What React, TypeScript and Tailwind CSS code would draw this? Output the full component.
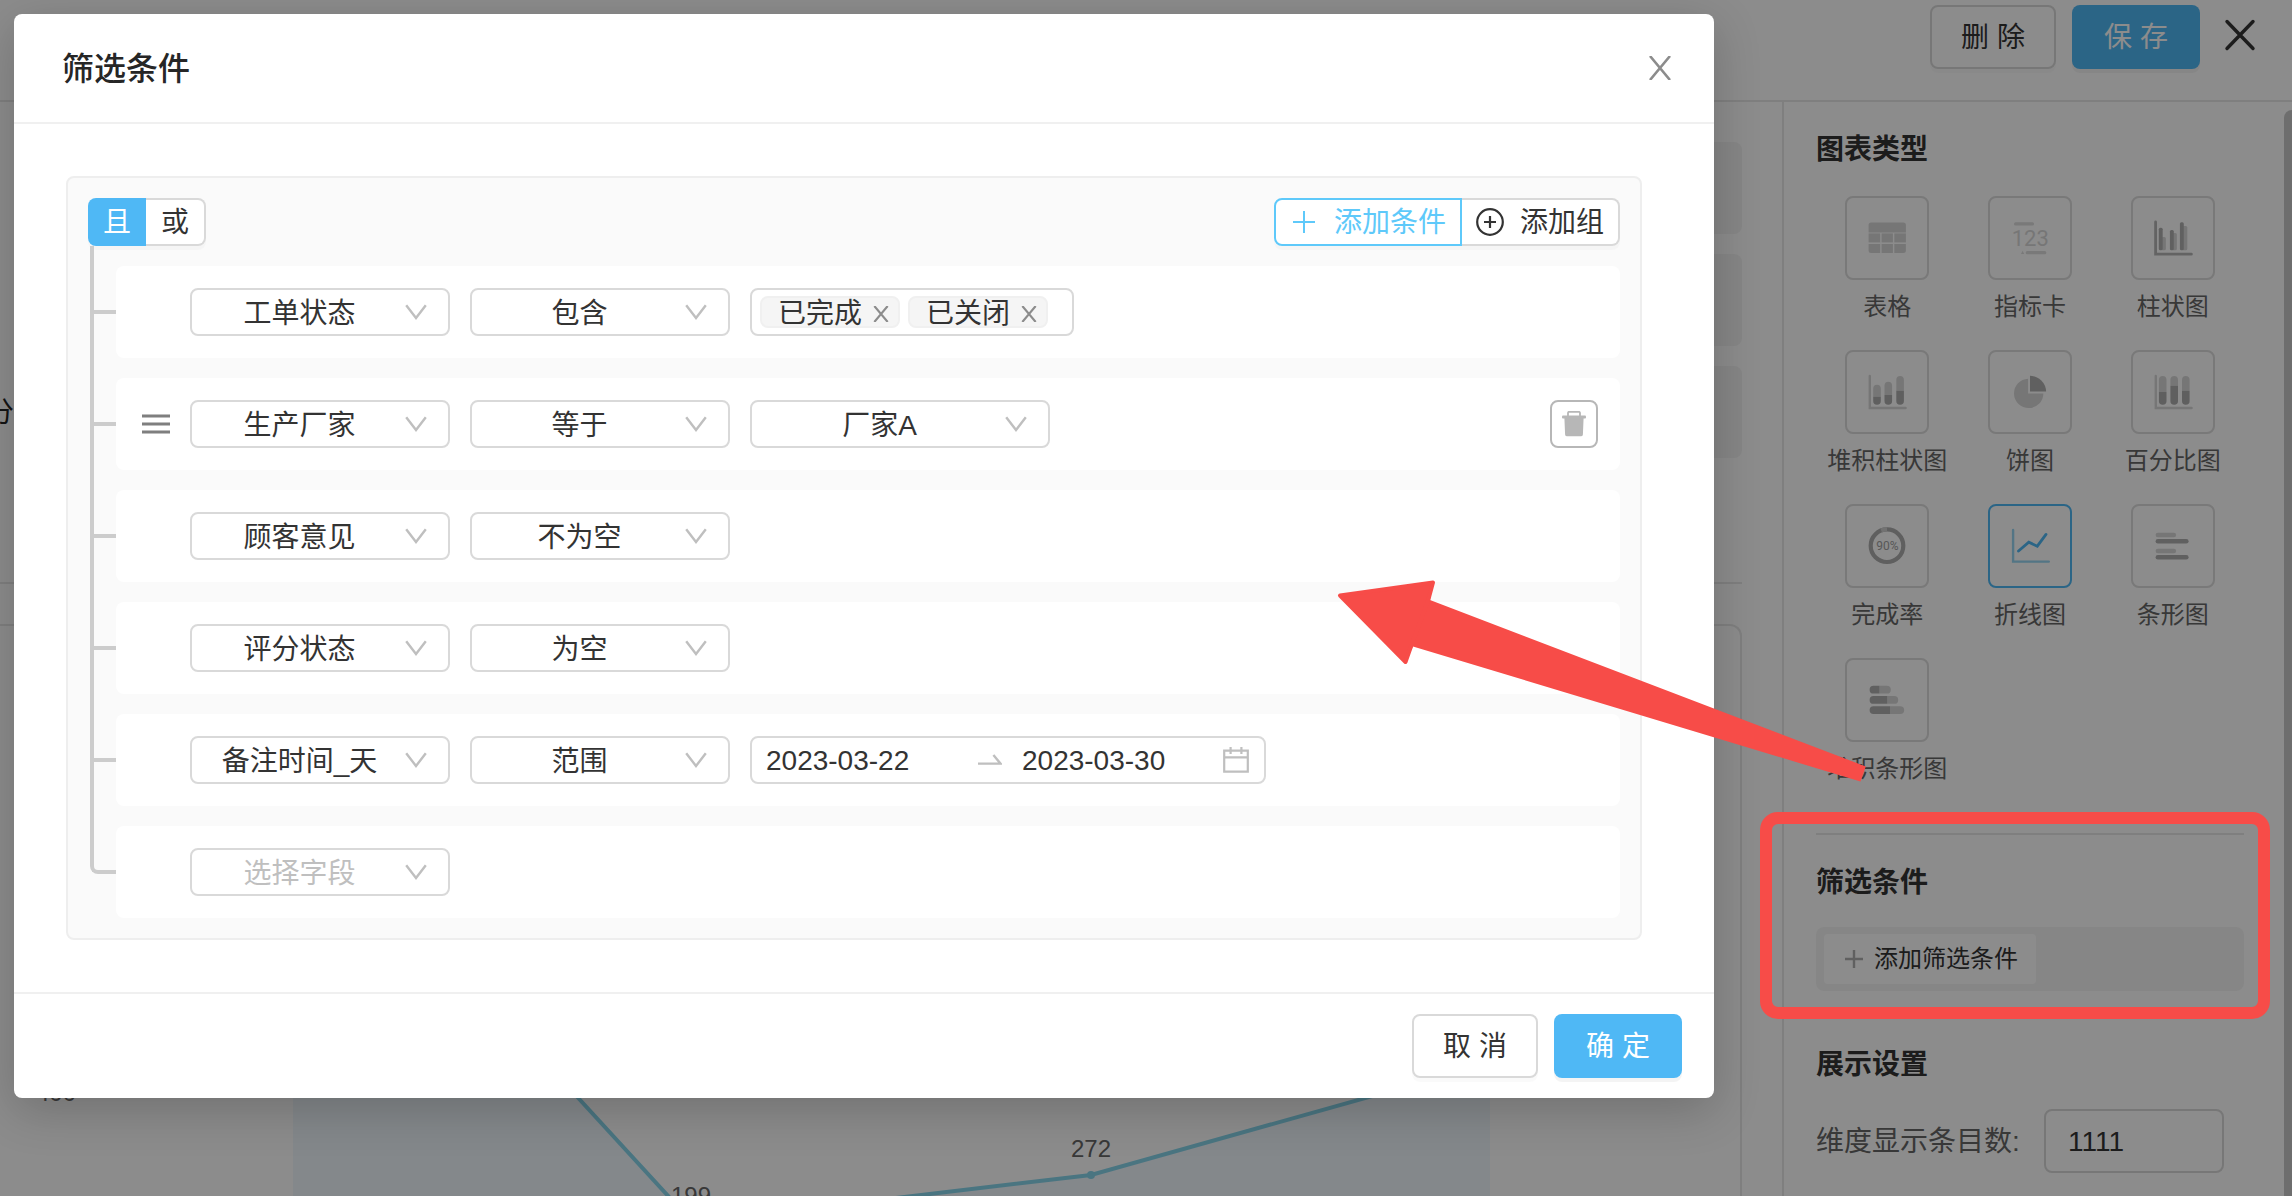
import React from "react";

const LIGHT = "#d8d8d8";
const DARK = "#b0b0b0";

/* ---------- small icons ---------- */

function Chevron() {
  return (
    <svg className="pointer-events-none absolute top-4 right-[23px] h-4 w-[22px]" viewBox="0 0 22 16" fill="none" aria-hidden="true">
      <path d="M1.2 1.2 L11 14 L20.8 1.2" stroke="#bfbfbf" strokeWidth="2.4" />
    </svg>
  );
}

function Cross({ className, width }: { className: string; width: number }) {
  return (
    <svg className={className} viewBox="0 0 24 24" fill="none" aria-hidden="true">
      <path d="M2 0 L22 24 M22 0 L2 24" stroke="currentColor" strokeWidth={width} />
    </svg>
  );
}

function TrashIcon() {
  return (
    <svg className="h-[26px] w-6" viewBox="0 0 24 26" aria-hidden="true">
      <path d="M6 5 V2 a1.2 1.2 0 0 1 1.2-1.2 H16.8 A1.2 1.2 0 0 1 18 2 V5" fill="none" stroke="#b7b7b7" strokeWidth="1.8" />
      <rect x="0" y="4.4" width="24" height="3" rx="1" fill="#b7b7b7" />
      <path d="M2.4 7 H21.6 L20.9 23.6 a1.6 1.6 0 0 1 -1.6 1.6 H4.7 a1.6 1.6 0 0 1 -1.6 -1.6 Z" fill="#b7b7b7" />
    </svg>
  );
}

function DragIcon() {
  return (
    <svg className="h-5 w-7" viewBox="0 0 28 20" aria-hidden="true">
      <path d="M0 2 H28 M0 10 H28 M0 18 H28" stroke="#7f7f7f" strokeWidth="3" />
    </svg>
  );
}

function CalendarIcon() {
  return (
    <svg className="h-[26px] w-[26px]" viewBox="0 0 26 26" fill="none" aria-hidden="true">
      <path d="M1.2 3.6 H24.8 V24.6 H1.2 Z M1.2 10.4 H24.8 M7.6 0 V7 M18.4 0 V7" stroke="#bfbfbf" strokeWidth="2.2" />
    </svg>
  );
}

/* ---------- chart type icons (40 x 40) ---------- */

function TableChart() {
  return (
    <g fill={LIGHT}>
      <path d="M1.6 14.4 V7 a2.5 2.5 0 0 1 2.5-2.6 H36.4 a2.5 2.5 0 0 1 2.5 2.6 V14.4 Z" />
      <rect x="1.6" y="15.4" width="11.6" height="9" />
      <rect x="14.6" y="15.4" width="11.3" height="9" />
      <rect x="27.3" y="15.4" width="11.6" height="9" />
      <path d="M1.6 26 H13.2 V35 H4.1 a2.5 2.5 0 0 1 -2.5 -2.5 Z" />
      <rect x="14.6" y="26" width="11.3" height="9" />
      <path d="M27.3 26 H38.9 V32.5 a2.5 2.5 0 0 1 -2.5 2.5 H27.3 Z" />
    </g>
  );
}

function CardChart() {
  return (
    <g fill="#dcdcdc">
      <rect x="4" y="4.3" width="20" height="3.2" rx="1.5" />
      <text x="20.3" y="28" textAnchor="middle" fontSize="22" fontFamily="Roboto, sans-serif" fill="#d8d8d8">
        123
      </text>
      <path d="M11 36 L12.6 32.8 L14.2 36 Z" />
      <rect x="15.7" y="33" width="20.6" height="3.2" rx="1.5" />
    </g>
  );
}

function ColumnChart() {
  return (
    <g>
      <path d="M2.6 4 V36.2 H38.4" fill="none" stroke="#b5b5b5" strokeWidth="2.8" strokeLinecap="round" />
      <g fill={LIGHT}>
        <rect x="8" y="19" width="4.9" height="13.3" rx="1.5" />
        <rect x="19" y="15" width="4.9" height="17.3" rx="1.5" />
        <rect x="29" y="8" width="5.3" height="24.3" rx="1.5" />
      </g>
      <g fill={DARK}>
        <rect x="5.8" y="9.7" width="3.9" height="22.6" rx="1.5" />
        <rect x="16.9" y="12" width="3.9" height="20.3" rx="1.5" />
        <rect x="26.9" y="4.3" width="3.9" height="28" rx="1.5" />
      </g>
    </g>
  );
}

function SplitColumn({ x, top, split }: { x: number; top: number; split: number }) {
  return (
    <g>
      <path d={`M${x} ${split} V${top + 3.8} a3.8 3.8 0 0 1 7.6 0 V${split} Z`} fill={LIGHT} />
      <path d={`M${x} ${split} V28.9 a3.8 3.8 0 0 0 7.6 0 V${split} Z`} fill="#adadad" />
    </g>
  );
}

function StackedColumnChart() {
  return (
    <g>
      <path d="M2.8 4 V36 H38.6" fill="none" stroke={LIGHT} strokeWidth="2.4" strokeLinecap="round" />
      <SplitColumn x={6.2} top={12.7} split={24.7} />
      <SplitColumn x={17.5} top={9.7} split={23} />
      <SplitColumn x={29.3} top={4} split={18.7} />
    </g>
  );
}

function PieChart() {
  return (
    <g>
      <path d="M18.1 6.7 A14.7 14.7 0 1 0 33.4 21.5 H18.1 Z" fill={LIGHT} />
      <path d="M20 19.6 V3.8 A16 16 0 0 1 36.1 19.6 Z" fill={DARK} />
    </g>
  );
}

function PercentChart() {
  return (
    <g>
      <path d="M2.8 4 V36 H38.6" fill="none" stroke={LIGHT} strokeWidth="2.4" strokeLinecap="round" />
      <SplitColumn x={5.9} top={4} split={20} />
      <SplitColumn x={17.4} top={4} split={13.7} />
      <SplitColumn x={29} top={4} split={18.7} />
    </g>
  );
}

function RateChart() {
  return (
    <g>
      <circle cx="20" cy="19.7" r="16.3" fill="none" stroke="#adadad" strokeWidth="4.2" />
      <path d="M14.2 4.5 A16.3 16.3 0 0 1 20 3.4" fill="none" stroke="#d0d0d0" strokeWidth="4.2" />
      <text x="20.5" y="24" textAnchor="middle" fontSize="12" fontFamily="Roboto, sans-serif" fill="#a0a0a0">
        90%
      </text>
    </g>
  );
}

function LineChart() {
  return (
    <g fill="none" strokeLinecap="round">
      <path d="M3.1 4 V35.6 H38.8" stroke="#97d6f2" strokeWidth="2.4" />
      <path d="M8.5 25 L18.8 16.2 L27.3 20.2 L36 8.4" stroke="#4fb8f5" strokeWidth="2.8" />
    </g>
  );
}

function BarChart() {
  return (
    <g>
      <rect x="2.6" y="6.8" width="20.5" height="4.5" rx="2.2" fill={LIGHT} />
      <rect x="2.6" y="13" width="33" height="4.5" rx="2.2" fill={DARK} />
      <rect x="2.6" y="22.8" width="20.5" height="4.5" rx="2.2" fill={LIGHT} />
      <rect x="2.6" y="29" width="33" height="4.5" rx="2.2" fill={DARK} />
    </g>
  );
}

function SplitBar({ y, end, split }: { y: number; end: number; split: number }) {
  return (
    <g>
      <path d={`M${split} ${y} H${end - 3.9} a3.9 3.9 0 0 1 0 7.8 H${split} Z`} fill={LIGHT} />
      <path d={`M${split} ${y} H6.5 a3.9 3.9 0 0 0 0 7.8 H${split} Z`} fill={DARK} />
    </g>
  );
}

function StackedBarChart() {
  return (
    <g>
      <SplitBar y={5.8} end={23.8} split={12.5} />
      <SplitBar y={16} end={31.2} split={20.3} />
      <SplitBar y={26.2} end={37.2} split={23} />
    </g>
  );
}

const CHART_TYPES = [
  { name: "表格", icon: <TableChart /> },
  { name: "指标卡", icon: <CardChart /> },
  { name: "柱状图", icon: <ColumnChart /> },
  { name: "堆积柱状图", icon: <StackedColumnChart /> },
  { name: "饼图", icon: <PieChart /> },
  { name: "百分比图", icon: <PercentChart /> },
  { name: "完成率", icon: <RateChart /> },
  { name: "折线图", icon: <LineChart />, active: true },
  { name: "条形图", icon: <BarChart /> },
  { name: "堆积条形图", icon: <StackedBarChart /> },
];

/* ---------- page behind the dialog ---------- */

function TrendChart() {
  return (
    <svg className="h-[570px] w-[1740px]" viewBox="0 0 1740 570" role="img" aria-label="折线图">
      <path d="M293 161 L692 596 L1091 549 L1490 437 V620 H293 Z" fill="#f0f7fd" />
      <path d="M293 161 L692 596 L1091 549 L1490 437" fill="none" stroke="#87d6ec" strokeWidth="4" />
      <circle cx="1091" cy="549" r="4" fill="#87d6ec" />
      <g fontSize="24" fill="#666666" textAnchor="middle">
        <text x="56" y="475">400</text>
        <text x="691" y="578">199</text>
        <text x="1091" y="531">272</text>
      </g>
    </svg>
  );
}

function Workspace() {
  return (
    <main className="min-w-0 flex-1 overflow-hidden pt-10 pr-10">
      <div className="flex flex-col gap-5">
        {["", "", "分"].map((label, i) => (
          <div key={i} className="flex h-[92px] items-center">
            <div className="flex w-[14px] shrink-0 justify-end overflow-hidden pt-0.5 text-[28px] text-[#262626]">{label}</div>
            <div className="h-full flex-1 rounded-lg bg-[#f4f4f4]" />
          </div>
        ))}
      </div>
      <div className="mt-[124px] border-t-2 border-[#e8e8e8]" />
      <div className="mt-10 overflow-hidden rounded-tr-xl border-t-2 border-r-2 border-[#e8e8e8]">
        <TrendChart />
      </div>
    </main>
  );
}

function SidebarHeading({ children }: { children: React.ReactNode }) {
  return <h2 className="pt-[3px] text-[28px] leading-[37px] font-bold text-[#333333]">{children}</h2>;
}

function Sidebar() {
  return (
    <aside className="flex w-[510px] shrink-0 overflow-hidden border-l-2 border-[#e8e8e8]">
      <div className="flex-1 pt-[26px] pr-10 pl-8">
        <SidebarHeading>图表类型</SidebarHeading>
        <div className="mt-7 grid grid-cols-3 gap-y-6">
          {CHART_TYPES.map((t) => (
            <button key={t.name} type="button" className="flex flex-col items-center gap-2">
              <span
                className={
                  t.active
                    ? "flex size-[84px] items-center justify-center rounded-lg border-2 border-[#4fb8f5]"
                    : "flex size-[84px] items-center justify-center rounded-lg border-2 border-[#dcdcdc]"
                }
              >
                <svg className="size-10 overflow-visible" viewBox="0 0 40 40" aria-hidden="true">
                  {t.icon}
                </svg>
              </span>
              <span className="text-2xl leading-[38px] whitespace-nowrap text-[#666666]">{t.name}</span>
            </button>
          ))}
        </div>
        <hr className="mt-[45px] mb-[26px] border-t-2 border-[#e8e8e8]" />
        <SidebarHeading>筛选条件</SidebarHeading>
        <div className="mt-[26px] flex h-16 items-center rounded-lg bg-[#f5f5f5] px-2">
          <button type="button" className="flex h-[50px] w-[212px] items-center gap-[11px] rounded bg-white pl-[21px] text-2xl whitespace-nowrap text-[#333333]">
            <svg className="size-[18px] shrink-0" viewBox="0 0 18 18" aria-hidden="true">
              <path d="M0 9 H18 M9 0 V18" stroke="#b0b0b0" strokeWidth="2.4" />
            </svg>
            添加筛选条件
          </button>
        </div>
        <div className="mt-[52px]">
          <SidebarHeading>展示设置</SidebarHeading>
        </div>
        <div className="mt-[26px] flex items-center justify-between pr-5">
          <label htmlFor="limit" className="pt-0.5 text-[28px] whitespace-nowrap text-[#666666]">
            维度显示条目数:
          </label>
          <input
            id="limit"
            defaultValue="1111"
            className="h-16 w-[180px] rounded-lg border-2 border-[#d9d9d9] px-[22px] pt-0.5 text-[28px] text-[#333333]"
          />
        </div>
      </div>
      <div className="mt-2 w-2 rounded-tl-lg bg-[#c8c8c8]" />
    </aside>
  );
}

/* ---------- dialog ---------- */

function FieldSelect({ value, label, wide, muted }: { value: string; label: string; wide?: boolean; muted?: boolean }) {
  return (
    <div className={wide ? "relative w-[300px]" : "relative w-[260px]"}>
      <select
        aria-label={label}
        defaultValue={value}
        className={
          muted
            ? "h-12 w-full appearance-none rounded-lg border-2 border-[#d9d9d9] bg-white pt-[3px] pr-[61px] pl-5 text-[28px] leading-[40px] text-[#bfbfbf] [text-align-last:center]"
            : "h-12 w-full appearance-none rounded-lg border-2 border-[#d9d9d9] bg-white pt-[3px] pr-[61px] pl-5 text-[28px] leading-[40px] text-[#333333] [text-align-last:center]"
        }
      >
        <option>{value}</option>
      </select>
      <Chevron />
    </div>
  );
}

function TagBox({ tags }: { tags: string[] }) {
  return (
    <div className="flex h-12 items-center gap-2 rounded-lg border-2 border-[#d9d9d9] bg-white pr-6 pl-2">
      {tags.map((tag) => (
        <span key={tag} className="flex h-8 w-[140px] items-center rounded-lg border-2 border-[#f0f0f0] bg-[#f5f5f5] pl-4 text-[28px] text-[#333333]">
          <span className="pt-[3px] leading-7">{tag}</span>
          <button type="button" aria-label={`移除${tag}`} className="ml-[11px] pt-1 text-[#8c8c8c]">
            <Cross className="size-4" width={3.2} />
          </button>
        </span>
      ))}
    </div>
  );
}

function DateRange({ from, to }: { from: string; to: string }) {
  return (
    <div className="flex h-12 w-[516px] items-center rounded-lg border-2 border-[#d9d9d9] bg-white pr-[15px] pl-[14px] text-[28px] text-[#333333]">
      <input aria-label="开始日期" defaultValue={from} className="h-10 w-[200px] pt-0.5" />
      <svg className="mr-5 ml-3 h-3 w-6 shrink-0" viewBox="0 0 24 12" fill="none" aria-hidden="true">
        <path d="M0 9.6 H22.5 L15.4 1" stroke="#bfbfbf" strokeWidth="2.4" />
      </svg>
      <input aria-label="结束日期" defaultValue={to} className="h-10 w-0 min-w-0 flex-1 pt-0.5" />
      <CalendarIcon />
    </div>
  );
}

const CONDITIONS: { field: string; op?: string; value?: React.ReactNode; hovered?: boolean }[] = [
  { field: "工单状态", op: "包含", value: <TagBox tags={["已完成", "已关闭"]} /> },
  { field: "生产厂家", op: "等于", value: <FieldSelect label="值" value="厂家A" wide />, hovered: true },
  { field: "顾客意见", op: "不为空" },
  { field: "评分状态", op: "为空" },
  { field: "备注时间_天", op: "范围", value: <DateRange from="2023-03-22" to="2023-03-30" /> },
  { field: "选择字段" },
];

function ConditionPanel() {
  return (
    <section className="rounded-lg border-2 border-[#eeeeee] bg-[#fafafa] p-5 text-[28px] text-[#333333]">
      <div className="flex h-12 items-stretch justify-between">
        <div className="flex rounded-lg shadow-[0_4px_0_rgba(0,0,0,0.02)]">
          <button type="button" className="w-[58px] rounded-l-lg bg-[#4fb8f5] pt-0.5 leading-[46px] text-white">
            且
          </button>
          <button type="button" className="w-[60px] rounded-r-lg border-2 border-l-0 border-[#d9d9d9] bg-white pt-0.5 leading-[42px]">
            或
          </button>
        </div>
        <div className="flex rounded-lg shadow-[0_4px_0_rgba(0,0,0,0.02)]">
          <button type="button" className="flex items-center gap-4 rounded-l-lg border-2 border-[#5ec9fa] bg-white px-[14px] leading-10 text-[#5ec9fa]">
            <svg className="size-7" viewBox="0 0 28 28" aria-hidden="true">
              <path d="M3 14 H25 M14 3 V25" stroke="currentColor" strokeWidth="2" />
            </svg>
            <span className="pt-0.5">添加条件</span>
          </button>
          <button type="button" className="flex items-center gap-4 rounded-r-lg border-2 border-l-0 border-[#d9d9d9] bg-white px-[14px] leading-10">
            <svg className="size-7" viewBox="0 0 28 28" fill="none" aria-hidden="true">
              <circle cx="14" cy="14" r="12.8" stroke="currentColor" strokeWidth="2.2" />
              <path d="M8 14 H20 M14 8 V20" stroke="currentColor" strokeWidth="2.2" />
            </svg>
            <span className="pt-0.5">添加组</span>
          </button>
        </div>
      </div>
      <div className="flex">
        <div className="mb-11 ml-0.5 flex w-[26px] shrink-0 flex-col gap-[108px] rounded-bl-lg border-b-4 border-l-4 border-[#cccccc] pt-16">
          {CONDITIONS.slice(1).map((c) => (
            <span key={c.field} className="h-1 bg-[#cccccc]" />
          ))}
        </div>
        <ul className="flex flex-1 flex-col gap-5 pt-5">
          {CONDITIONS.map((c) => (
            <li key={c.field} className="flex h-[92px] items-center rounded-lg bg-white pr-[22px]">
              <div className="w-[74px] shrink-0 pl-[26px]">
                {c.hovered && (
                  <button type="button" aria-label="拖动排序" className="block">
                    <DragIcon />
                  </button>
                )}
              </div>
              <div className="flex flex-1 gap-5">
                <FieldSelect label="字段" value={c.field} muted={!c.op} />
                {c.op && <FieldSelect label="运算符" value={c.op} />}
                {c.value}
              </div>
              {c.hovered && (
                <button type="button" aria-label="删除条件" className="flex size-12 items-center justify-center rounded-lg border-2 border-[#b7b7b7]">
                  <TrashIcon />
                </button>
              )}
            </li>
          ))}
        </ul>
      </div>
    </section>
  );
}

function FilterDialog() {
  return (
    <div role="dialog" aria-label="筛选条件" className="w-full rounded-lg bg-white shadow-[0_12px_48px_rgba(0,0,0,0.2)]">
      <header className="flex h-[110px] items-center justify-between border-b-2 border-[#f0f0f0] pr-[42px] pl-12">
        <h1 className="pt-0.5 text-[32px] font-medium text-[#262626]">筛选条件</h1>
        <button type="button" aria-label="关闭" className="text-[#8c8c8c]">
          <Cross className="size-6" width={2.6} />
        </button>
      </header>
      <div className="py-[52px] pr-[72px] pl-[52px]">
        <ConditionPanel />
      </div>
      <footer className="flex h-[106px] items-center justify-end gap-4 border-t-2 border-[#f0f0f0] pr-8 text-[28px]">
        <button type="button" className="h-16 w-[126px] rounded-lg border-2 border-[#d9d9d9] bg-white pt-0.5 text-[#333333] shadow-[0_4px_0_rgba(0,0,0,0.02)]">
          取 消
        </button>
        <button type="button" className="h-16 w-32 rounded-lg bg-[#4fb8f5] pt-0.5 text-white shadow-[0_4px_0_rgba(0,0,0,0.045)]">
          确 定
        </button>
      </footer>
    </div>
  );
}

/* ---------- callout marks drawn over the page ---------- */

function Callouts() {
  return (
    <>
      <div className="pointer-events-none absolute top-[812px] right-[22px] h-[207px] w-[510px] rounded-[18px] border-12 border-[#f74c48]" />
      <svg className="pointer-events-none absolute top-[576px] right-[422px] h-[212px] w-[536px]" viewBox="1334 576 536 212" aria-hidden="true">
        <path
          d="M1340 596 L1405.5 662 L1413 646.5 L1860.5 781.5 L1865.8 766.5 L1430 600 L1433 582.5 Z"
          fill="#f74c48"
        />
        <path
          d="M1411.5 645 L1405.5 662 L1340 595.5 L1433 582.5 L1428 601 Z"
          fill="#f74c48"
          stroke="#f74c48"
          strokeWidth="4"
          strokeLinejoin="round"
        />
      </svg>
    </>
  );
}

export default function App() {
  return (
    <div className="relative flex h-screen flex-col overflow-hidden bg-white font-['Liberation_Sans','Noto_Sans_CJK_SC',sans-serif]">
      <header className="flex h-[102px] shrink-0 items-start justify-end gap-4 border-b-2 border-[#e8e8e8] pt-[5px] pr-[34px] text-[28px]">
        <button type="button" className="h-16 w-[126px] rounded-lg border-2 border-[#d9d9d9] pt-0.5 text-[#333333] shadow-[0_4px_0_rgba(0,0,0,0.02)]">
          删 除
        </button>
        <button type="button" className="h-16 w-32 rounded-lg bg-[#4fb8f5] pt-0.5 text-white shadow-[0_4px_0_rgba(0,0,0,0.045)]">
          保 存
        </button>
        <button type="button" aria-label="退出" className="ml-1.5 pt-3 text-[#333333]">
          <svg className="size-9" viewBox="0 0 36 36" aria-hidden="true">
            <path d="M5 4.5 L31 31.5 M31 4.5 L5 31.5" stroke="currentColor" strokeWidth="3.4" strokeLinecap="round" />
          </svg>
        </button>
      </header>
      <div className="flex min-h-0 flex-1">
        <Workspace />
        <Sidebar />
      </div>
      <div className="absolute inset-0 bg-black/45 pt-[14px] pr-[578px] pl-[14px]">
        <FilterDialog />
      </div>
      <Callouts />
    </div>
  );
}
